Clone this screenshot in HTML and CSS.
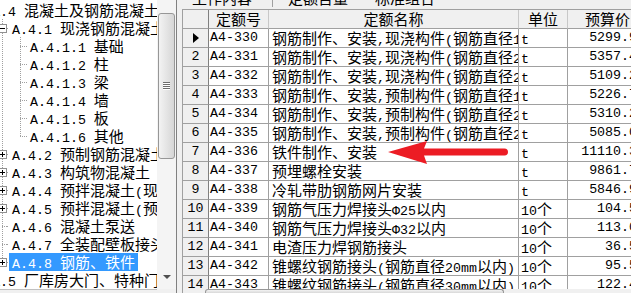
FILE: index.html
```html
<!DOCTYPE html>
<html lang="zh-CN">
<head>
<meta charset="UTF-8">
<title>定额库</title>
<link rel="stylesheet" href="styles.css">
</head>
<body>
<div class="app">
  <div class="side">
    <div class="tree">
      <div class="node lv0"><span class="txt"><span class="m">A.4 </span>混凝土及钢筋混凝土工程</span></div>
      <div class="node"><span class="g"><span class="box"></span></span><span class="dash"></span><span class="txt"><span class="m">A.4.1 </span>现浇钢筋混凝土构件</span></div>
      <div class="node"><span class="g"></span><span class="g2"></span><span class="txt"><span class="m">A.4.1.1 </span>基础</span></div>
      <div class="node"><span class="g"></span><span class="g2"></span><span class="txt"><span class="m">A.4.1.2 </span>柱</span></div>
      <div class="node"><span class="g"></span><span class="g2"></span><span class="txt"><span class="m">A.4.1.3 </span>梁</span></div>
      <div class="node"><span class="g"></span><span class="g2"></span><span class="txt"><span class="m">A.4.1.4 </span>墙</span></div>
      <div class="node"><span class="g"></span><span class="g2"></span><span class="txt"><span class="m">A.4.1.5 </span>板</span></div>
      <div class="node"><span class="g"></span><span class="g2 end"></span><span class="txt"><span class="m">A.4.1.6 </span>其他</span></div>
      <div class="node"><span class="g"><span class="box plus"></span></span><span class="dash"></span><span class="txt"><span class="m">A.4.2 </span>预制钢筋混凝土构件</span></div>
      <div class="node"><span class="g"><span class="box plus"></span></span><span class="dash"></span><span class="txt"><span class="m">A.4.3 </span>构筑物混凝土</span></div>
      <div class="node"><span class="g"><span class="box plus"></span></span><span class="dash"></span><span class="txt"><span class="m">A.4.4 </span>预拌混凝土<span class="m">(</span>现浇<span class="m">)</span></span></div>
      <div class="node"><span class="g"><span class="box plus"></span></span><span class="dash"></span><span class="txt"><span class="m">A.4.5 </span>预拌混凝土<span class="m">(</span>预制<span class="m">)</span></span></div>
      <div class="node"><span class="g leaf"></span><span class="dash"></span><span class="txt"><span class="m">A.4.6 </span>混凝土泵送</span></div>
      <div class="node"><span class="g leaf"></span><span class="dash"></span><span class="txt"><span class="m">A.4.7 </span>全装配壁板接头灌缝</span></div>
      <div class="node sel"><span class="g end"><span class="box plus"></span></span><span class="dash"></span><span class="txt"><span class="m">A.4.8 </span>钢筋、铁件</span></div>
      <div class="node lv0"><span class="txt"><span class="m">A.5 </span>厂库房大门、特种门、木结构工程</span></div>
    </div>
    <div class="vbar">
      <div class="up"></div>
      <div class="thumb-v"><span class="grip"></span></div>
      <div class="down"><span class="tri"></span></div>
    </div>
    <div class="hbar-l"></div>
    <div class="corner"></div>
  </div>

  <div class="main">
    <div class="tabs">
      <span class="tab">工作内容</span>
      <span class="sep"></span>
      <span class="tab">定额含量</span>
      <span class="tab last">标准组合</span>
    </div>
    <div class="grid">
      <div class="rows">
        <div class="row head"><span class="c ind"></span><span class="c">定额号</span><span class="c">定额名称</span><span class="c">单位</span><span class="c">预算价</span></div>
        <div class="row"><span class="c ind"><i class="cur"></i></span><span class="c code m">A4-330</span><span class="c name">钢筋制作、安装<span class="m">,</span>现浇构件<span class="m">(</span>钢筋直径<span class="m">10mm</span>以内<span class="m">)</span></span><span class="c unit"><span class="m">t</span></span><span class="c price m">5299.93</span></div>
        <div class="row"><span class="c ind m">2</span><span class="c code m">A4-331</span><span class="c name">钢筋制作、安装<span class="m">,</span>现浇构件<span class="m">(</span>钢筋直径<span class="m">20mm</span>以内<span class="m">)</span></span><span class="c unit"><span class="m">t</span></span><span class="c price m">5357.44</span></div>
        <div class="row"><span class="c ind m">3</span><span class="c code m">A4-332</span><span class="c name">钢筋制作、安装<span class="m">,</span>现浇构件<span class="m">(</span>钢筋直径<span class="m">20mm</span>以上<span class="m">)</span></span><span class="c unit"><span class="m">t</span></span><span class="c price m">5109.21</span></div>
        <div class="row"><span class="c ind m">4</span><span class="c code m">A4-333</span><span class="c name">钢筋制作、安装<span class="m">,</span>预制构件<span class="m">(</span>钢筋直径<span class="m">10mm</span>以内<span class="m">)</span></span><span class="c unit"><span class="m">t</span></span><span class="c price m">5226.73</span></div>
        <div class="row"><span class="c ind m">5</span><span class="c code m">A4-334</span><span class="c name">钢筋制作、安装<span class="m">,</span>预制构件<span class="m">(</span>钢筋直径<span class="m">20mm</span>以内<span class="m">)</span></span><span class="c unit"><span class="m">t</span></span><span class="c price m">5310.28</span></div>
        <div class="row"><span class="c ind m">6</span><span class="c code m">A4-335</span><span class="c name">钢筋制作、安装<span class="m">,</span>预制构件<span class="m">(</span>钢筋直径<span class="m">20mm</span>以上<span class="m">)</span></span><span class="c unit"><span class="m">t</span></span><span class="c price m">5085.04</span></div>
        <div class="row"><span class="c ind m">7</span><span class="c code m">A4-336</span><span class="c name">铁件制作、安装</span><span class="c unit"><span class="m">t</span></span><span class="c price m">11110.33</span></div>
        <div class="row"><span class="c ind m">8</span><span class="c code m">A4-337</span><span class="c name">预埋螺栓安装</span><span class="c unit"><span class="m">t</span></span><span class="c price m">9861.72</span></div>
        <div class="row"><span class="c ind m">9</span><span class="c code m">A4-338</span><span class="c name">冷轧带肋钢筋网片安装</span><span class="c unit"><span class="m">t</span></span><span class="c price m">5846.93</span></div>
        <div class="row"><span class="c ind m">10</span><span class="c code m">A4-339</span><span class="c name">钢筋气压力焊接头<span class="m">Φ25</span>以内</span><span class="c unit"><span class="m">10</span>个</span><span class="c price m">104.55</span></div>
        <div class="row"><span class="c ind m">11</span><span class="c code m">A4-340</span><span class="c name">钢筋气压力焊接头<span class="m">Φ32</span>以内</span><span class="c unit"><span class="m">10</span>个</span><span class="c price m">113.03</span></div>
        <div class="row"><span class="c ind m">12</span><span class="c code m">A4-341</span><span class="c name">电渣压力焊钢筋接头</span><span class="c unit"><span class="m">10</span>个</span><span class="c price m">36.56</span></div>
        <div class="row"><span class="c ind m">13</span><span class="c code m">A4-342</span><span class="c name">锥螺纹钢筋接头<span class="m">(</span>钢筋直径<span class="m">20mm</span>以内<span class="m">)</span></span><span class="c unit"><span class="m">10</span>个</span><span class="c price m">95.51</span></div>
        <div class="row"><span class="c ind m">14</span><span class="c code m">A4-343</span><span class="c name">锥螺纹钢筋接头<span class="m">(</span>钢筋直径<span class="m">30mm</span>以内<span class="m">)</span></span><span class="c unit"><span class="m">10</span>个</span><span class="c price m">122.40</span></div>
      </div>
      <div class="hbar"><span class="thumb-h"></span></div>
    </div>
  </div>
</div>

<!-- 红色标注箭头 -->
<svg class="arrow" viewBox="0 0 130 30">
  <path d="M3 14 L42 3 L39 10.5 L119.5 10.5 A3.5 3.5 0 0 1 119.5 17.5 L39 17.5 L42 26 Z" fill="#ec1c24"/>
</svg>
</body>
</html>
```

FILE: styles.css
```css
html, body {
    margin: 0;
    height: 100%;
    overflow: hidden;
}
body {
    font-family: "Noto Sans CJK SC", sans-serif;
    font-size: 15px;
    color: #000;
    background: #f0f0f0;
}
.app {
    display: flex;
    height: 293px;
}
.m {
    font-family: "Liberation Mono", monospace;
    font-size: 13.3px;
    line-height: 1;
}

/* 左侧树 */
.side {
    flex: none;
    display: grid;
    grid-template-columns: 157px 19px;
    grid-template-rows: 289px 4px;
    background: #fff;
}
.tree {
    overflow: hidden;
    padding-top: 1px;
    background: #fff;
}
.node {
    display: flex;
    align-items: flex-start;
    height: 18px;
    white-space: nowrap;
}
.txt {
    flex: none;
    height: 18px;
    line-height: 18px;
    padding: 0 3px;
}
.lv0 .txt {
    margin-left: -11px;
}
.sel .txt {
    background: #3399ff;
    color: #fff;
}
.g {
    flex: none;
    width: 9px;
    height: 18px;
    margin-left: -2px;
    background: repeating-linear-gradient(to bottom, #a0a0a0 0 1px, transparent 1px 2px) 4px 0 / 1px 18px no-repeat;
}
.g.end {
    background-size: 1px 10px;
}
.g.leaf {
    background:
        repeating-linear-gradient(to bottom, #a0a0a0 0 1px, transparent 1px 2px) 4px 0 / 1px 18px no-repeat,
        repeating-linear-gradient(to right, #a0a0a0 0 1px, transparent 1px 2px) 4px 9px / 5px 1px no-repeat;
}
.g2 {
    flex: none;
    width: 20px;
    height: 18px;
    background:
        repeating-linear-gradient(to bottom, #a0a0a0 0 1px, transparent 1px 2px) 13px 0 / 1px 18px no-repeat,
        repeating-linear-gradient(to right, #a0a0a0 0 1px, transparent 1px 2px) 13px 9px / 7px 1px no-repeat;
}
.g2.end {
    background-size: 1px 10px, 7px 1px;
}
.box {
    display: block;
    box-sizing: border-box;
    width: 9px;
    height: 9px;
    margin-top: 5px;
    border: 1px solid #919191;
    background: linear-gradient(#000, #000) center / 5px 1px no-repeat, #fff;
}
.box.plus {
    background:
        linear-gradient(#000, #000) center / 5px 1px no-repeat,
        linear-gradient(#000, #000) center / 1px 5px no-repeat,
        #fff;
}
.dash {
    flex: none;
    width: 2px;
    height: 1px;
    margin-top: 9px;
    background: repeating-linear-gradient(to right, #a0a0a0 0 1px, transparent 1px 2px);
}

/* 滚动条 */
.vbar {
    display: flex;
    flex-direction: column;
    align-items: center;
    background: #f4f4f4;
}
.up {
    height: 13px;
    flex: none;
}
.thumb-v {
    flex: none;
    box-sizing: border-box;
    width: 17px;
    height: 146px;
    border: 1px solid #979797;
    border-radius: 3px;
    background: linear-gradient(to right, #f3f3f3, #d6d6d6);
    display: flex;
    align-items: center;
    justify-content: center;
}
.grip {
    width: 7px;
    height: 8px;
    background: repeating-linear-gradient(to bottom, #6e6e6e 0 1px, #fff 1px 2px);
}
.down {
    margin-top: auto;
    margin-bottom: 4px;
    height: 16px;
    display: flex;
    align-items: center;
    justify-content: center;
}
.tri {
    width: 0;
    height: 0;
    border-left: 4px solid transparent;
    border-right: 4px solid transparent;
    border-top: 4px solid #4f4f4f;
}
.hbar-l {
    background: #f0f0f0;
    border-top: 1px solid #c0c0c0;
}
.corner {
    background: #f0f0f0;
}

/* 右侧表格 */
.main {
    flex: 1;
    min-width: 0;
    display: flex;
    flex-direction: column;
    border-left: 1px solid #808080;
    background: #f0f0f0;
}
.tabs {
    flex: none;
    height: 9px;
    overflow: hidden;
    display: flex;
    padding-left: 15px;
}
.tab {
    height: 15px;
    line-height: 15px;
    margin-top: -10px;
}
.tab.last {
    margin-left: 27px;
}
.sep {
    width: 1px;
    height: 7px;
    background: #a0a0a0;
    margin: 0 15px 0 20px;
}
.grid {
    flex: 1;
    min-height: 0;
    margin-left: 5px;
    border-top: 1px solid #a0a0a0;
    border-left: 1px solid #a0a0a0;
    background: #fff;
    display: flex;
    flex-direction: column;
}
.rows {
    flex: 1;
    min-height: 0;
    overflow: hidden;
}
.row {
    display: grid;
    grid-template-columns: 26px 60px 250px 49px 80px;
    width: 465px;
    height: 19px;
}
.c {
    box-sizing: border-box;
    height: 19px;
    line-height: 18px;
    padding: 0 3px;
    overflow: hidden;
    white-space: nowrap;
    border-right: 1px solid #a0a0a0;
    border-bottom: 1px solid #a0a0a0;
}
.c.m {
    font-size: 13.3px;
    line-height: 18px;
}
.head .c {
    background: #f0f0f0;
    text-align: center;
    border-right-color: #c8c8c8;
}
.ind {
    background: #f0f0f0;
    padding: 0;
    text-align: center;
    display: flex;
    align-items: center;
    justify-content: center;
}
.row .ind {
    border-right-color: #808080;
}
.cur {
    width: 0;
    height: 0;
    border-left: 6px solid #000;
    border-top: 5px solid transparent;
    border-bottom: 5px solid transparent;
}
.code {
    padding-left: 1px;
}
.unit {
    padding-left: 2px;
}
.price {
    text-align: right;
    padding-right: 2px;
}
.hbar {
    flex: none;
    height: 4px;
    display: flex;
    background: #f0f0f0;
}
.thumb-h {
    margin-left: 22px;
    width: 297px;
    border: 1px solid #979797;
    border-bottom: 0;
    border-radius: 3px 3px 0 0;
    background: linear-gradient(#f3f3f3, #d8d8d8);
}

.arrow {
    position: absolute;
    left: 385px;
    top: 138px;
    width: 130px;
    height: 30px;
}
```
